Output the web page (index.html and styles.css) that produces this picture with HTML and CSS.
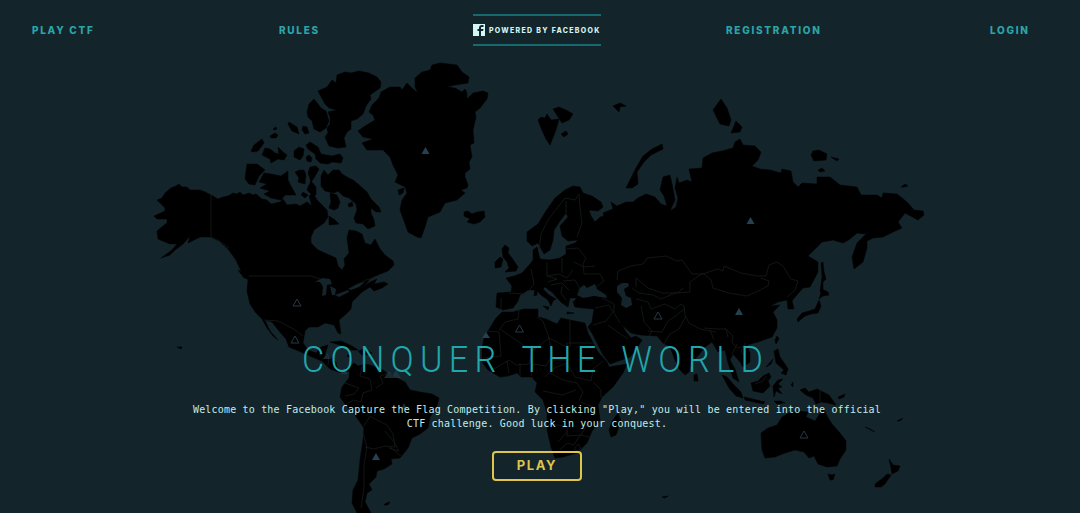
FILE: index.html
```html
<!DOCTYPE html>
<html lang="en">
<head>
<meta charset="utf-8">
<title>Capture the Flag</title>
<link rel="stylesheet" href="styles.css">
</head>
<body>
<div class="page">
<svg class="map" viewBox="0 0 1080 513" aria-hidden="true">
<g class="land">
<!-- North America -->
<path d="M157 200L162 198 165 193 171 188 176 186 179 184 182 187 187 187 190 190 200 190 205 192 213 196 218 199 223 197 228 196 233 193 237 194 240 192 243 195 249 193 253 195 256 194 262 199 267 200 271 204 280 202 283 199 287 205 296 204 300 206 307 202 312 206 309 196 313 193 317 200 322 205 327 210 328 217 324 223 314 230 311 237 311 243 318 250 327 254 336 258 338 266 342 270 345 265 344 259 349 253 348 245 347 238 349 230 356 231 362 234 365 243 371 245 375 239 380 249 385 255 393 261 394 265 388 271 380 274 371 278 364 286 370 282 377 279 374 284 384 282 388 284 382 288 374 291 370 287 362 292 357 297 352 302 351 309 345 315 339 320 340 327 341 334 338 333 334 325 325 323 318 327 309 327 305 331 303 343 308 350 316 353 321 347 328 345 325 354 331 358 336 362 337 368 342 371 350 366 350 371 341 373 330 369 322 361 312 357 301 352 289 347 286 339 279 331 272 322 265 320 270 331 278 340 273 336 267 328 262 319 256 313 250 304 247 291 248 280 241 271 236 260 228 249 219 241 210 237 200 237 194 240 188 243 190 236 183 244 175 250 170 255 161 258 172 250 177 244 170 244 158 239 157 231 163 226 167 223 167 219 157 219 154 216 165 211 165 208z"/>
<path d="M245 179L247 164 257 164 265 170 259 176 255 185 249 184zM251 151L254 145 262 139 264 143 258 151 253 152zM262 155L265 148 270 149 275 153 279 154 278 147 283 152 287 155 284 160 278 159 271 163 270 159zM259 182L264 173 271 174 281 176 288 171 288 180 292 188 296 195 285 195 281 200 271 198 264 194 270 191 260 188 267 184zM294 157L294 151 299 147 304 149 303 156 300 160zM302 130L303 126 307 127 309 133 305 134zM288 124L289 122 297 127 299 134 292 131zM270 136L275 133 278 135 276 138 271 138zM273 129L276 127 277 129 274 130zM306 157L309 155 312 158 311 162 307 161zM306 145L310 142 318 147 321 154 332 156 340 154 343 158 341 163 332 162 328 164 320 163 316 159 315 154 308 149zM308 173L310 167 316 166 319 169 314 178 311 182zM308 187L311 181 316 187 316 195 312 195 307 190zM295 172L300 170 304 170 306 175 305 184 298 182 299 178zM301 195L303 192 308 195 305 198z"/>
<path d="M321 176L324 170 328 175 333 170 339 170 342 174 347 177 353 180 358 184 367 192 371 199 379 207 381 212 376 212 371 208 371 213 374 220 375 226 368 229 363 224 356 223 354 218 357 210 356 204 349 198 343 196 338 191 334 193 325 191 321 186zM330 193L337 195 340 202 338 208 334 210 329 208 331 202zM329 216L335 220 339 224 329 225zM348 204L352 202 353 206 349 207z"/>
<path d="M318 91L327 87 332 80 336 83 337 75 345 72 351 73 359 71 369 73 377 77 381 82 380 88 370 95 371 99 366 106 363 114 357 119 351 121 351 129 347 132 344 138 346 147 338 148 329 146 325 137 328 133 327 128 330 124 330 117 328 112 337 110 329 108 325 104z"/>
<path d="M307 112L309 104 314 99 318 104 321 108 326 111 329 121 326 128 320 132 314 129 312 121 308 117z"/>
<!-- Greenland -->
<path d="M358 131L365 126 375 120 373 115 369 112 372 105 379 98 381 92 390 87 400 87 402 90 407 83 413 89 418 93 415 87 415 78 422 72 430 70 432 65 440 63 457 65 462 72 469 77 468 83 455 85 447 87 455 88 462 92 465 89 467 93 467 99 473 93 483 91 488 93 487 99 480 108 475 112 476 117 473 130 474 143 470 145 472 157 469 162 470 169 465 173 465 177 468 185 467 188 461 190 465 193 457 200 445 203 440 212 428 217 425 227 421 238 417 237 408 232 403 218 400 210 402 200 407 193 405 187 395 182 398 175 393 165 390 157 383 150 367 150 362 143 373 139 363 137z"/>
<path d="M398 190L404 188 403 193 399 195zM464 212L468 211 472 214 477 212 484 211 485 217 480 222 474 224 467 222 470 219 464 216zM330 342L341 341 352 346 358 350 350 350 343 346zM358 351L364 349 372 353 363 356zM347 355h4l1 2h-4zM386 503L390 502 388 505 384 505zM238 270L244 273 250 279 244 278z"/>
<!-- South America -->
<path d="M350 366L354 363 358 366 366 364 373 366 380 368 387 373 395 377 405 382 410 390 420 392 432 394 439 398 437 406 430 417 428 428 420 434 412 438 408 448 400 458 391 459 392 464 384 469 377 471 376 477 369 484 372 490 367 493 365 502 371 513 357 513 352 503 353 490 358 480 360 460 363 440 364 428 355 415 348 408 340 397 342 387 349 378z"/>
<!-- Europe and Asia -->
<path d="M527 241L527 232 538 224 546 211 555 198 565 190 573 186 580 187 583 193 592 196 601 202 603 207 598 211 589 210 591 216 595 222 600 217 604 216 603 213 613 209 611 202 617 206 626 202 633 202 638 198 646 194 655 197 661 204 667 206 664 196 660 190 663 177 670 175 672 184 675 200 670 211 676 207 678 198 675 188 677 177 679 183 687 180 692 182 689 169 702 168 703 158 712 153 722 151 733 148 735 142 740 139 743 145 755 146 761 152 758 160 752 166 760 169 770 170 781 173 782 169 791 171 793 182 798 187 802 183 817 184 817 177 830 177 840 185 857 187 861 195 877 195 882 198 883 193 897 194 907 202 914 210 923 211 924 215 918 220 905 213 898 222 902 228 893 232 883 237 873 238 867 241 867 248 863 262 854 269 852 257 857 243 870 230 865 234 857 233 850 239 843 243 833 240 822 242 815 249 808 256 818 262 818 272 810 287 803 288 795 297 792 301 794 309 788 309 787 300 778 302 770 306 780 305 773 312 777 320 777 328 772 337 758 342 747 345 750 353 750 362 743 367 740 362 733 354 730 360 735 369 739 382 733 378 728 363 725 350 718 352 712 342 705 347 697 357 691 362 689 372 685 375 680 370 675 360 670 347 663 343 657 336 640 335 631 333 622 325 626 332 631 338 636 336 642 340 637 348 630 357 610 364 603 355 593 335 588 327 592 322 594 309 583 308 575 307 573 302 577 298 570 298 568 307 562 303 557 298 553 293 545 287 543 289 549 295 556 299 553 301 551 306 548 300 541 295 536 290 528 290 520 295 518 301 513 308 503 310 496 307 497 293 511 292 512 286 506 278 514 276 522 273 530 264 533 260 533 250 537 247 540 259 550 260 560 258 566 254 566 246 575 243 578 240 568 241 562 236 560 226 568 217 566 213 560 221 554 230 553 240 550 250 544 254 538 243 532 246z"/>
<path class="sea" d="M577 295L580 288 584 285 587 288 595 284 597 289 606 295 607 298 594 296 583 298zM617 292L617 286 622 283 628 283 629 286 624 289 626 296 631 298 632 305 626 308 621 305 622 298z"/>
<path d="M502 249L505 245 509 248 508 253 512 258 518 267 516 271 505 272 509 268 507 262 503 257zM495 262L500 257 503 259 501 267 495 268zM538 120L541 117 545 118 547 114 551 120 559 119 556 130 550 145 546 139 541 128zM553 109L559 107 566 110 573 114 569 120 562 123zM561 134L566 131 568 134 564 137zM626 188L630 180 636 168 643 156 652 149 662 144 663 149 651 155 644 162 637 172 638 184 632 188zM713 110L721 99 727 108 731 120 729 126 720 124 715 114zM731 133L736 121 742 127 740 132zM613 106L620 103 626 106 620 107 619 112zM811 155L813 151 819 150 827 154 826 160 814 161zM831 157L839 159 837 161zM818 170L822 168 825 171 820 172zM901 187L905 184 908 186 904 187zM821 263L823 262 824 272 826 279 823 282 823 291 820 292 822 277zM820 296L822 289 828 292 829 295 823 296 819 299zM797 319L802 313 809 311 815 309 819 300 821 306 818 313 811 314 805 316 798 322z"/>
<path d="M777 336L779 339 776 344 775 340zM774 351L778 349 780 357 785 364 788 369 786 375 781 373 784 370 776 363zM766 367L773 359 771 364zM722 375L727 377 734 385 741 392 743 398 736 396 729 388zM744 397L757 400 765 402 763 404 745 400zM751 383L758 381 763 376 769 373 771 377 768 381 770 386 763 393 753 391zM773 386L778 380 783 379 778 384 782 387 778 388 782 394 776 391 774 397zM800 390L805 388 809 392 817 389 829 395 836 405 828 403 821 402 816 404 813 398 806 395zM694 375L697 374 698 381 694 381zM774 401h7l4 2-8 1zM791 385l2-3 0 5zM838 397L845 394 844 397 839 399z"/>
<!-- Africa -->
<path d="M482 350L484 338 491 326 496 318 502 312 513 312 524 309 538 309 538 317 546 319 557 324 561 318 570 320 585 323 588 333 598 352 607 362 609 367 627 364 623 373 613 387 602 397 598 405 600 420 592 431 587 443 577 453 563 457 555 458 551 447 547 430 547 413 543 400 535 392 537 383 532 377 521 377 517 373 508 376 500 377 488 370 482 362zM618 413L621 421 616 435 611 437 609 430 612 421z"/>
<path d="M535 288L537 288 537 295 534 296zM543 306L549 307 548 310zM567 312L574 313 567 314z"/>
<!-- Oceania -->
<path d="M761 433L768 428 777 425 782 417 789 413 797 411 808 412 806 417 815 421 819 415 823 407 827 416 832 424 840 433 846 441 846 450 840 459 837 466 827 467 818 464 814 456 809 458 804 452 795 450 785 453 775 457 765 458 762 450zM828 474L832 475 835 474 833 480 830 480zM889 459L893 465 900 466 898 471 892 474 891 468zM887 474L891 475 885 484 881 487 875 487 875 484 883 478zM865 427l5 2 5 3-2-1zM897 421l6-3-3 3zM662 497l6-1-3 2zM177 347l5 0-1 2z"/>
</g>
<g class="water">
<path d="M315 282l7-4 8 1 2 5-5 1-1 10-4 1 1-9-3-5zM330 286l6 3-1 6-3 0zM335 295l13-5 1 2-10 5zM348 289l9-5 8-2-6 5-8 3z"/>
</g>
<g class="borders">
<path d="M211 194v43l10 5 8 6M249 276h62l9 3M358 284l8-4 9-2M264 320l14 1 8 4 9 5 8 6M320 348v8M329 355l-1 10M362 366l-2 10 10 3 2 11-9 3-2 9-8-2-7 5M345 383l14 5-5 6-9 2M388 373l-8 3 3 7-7 5M364 426l6-10 5 3 12 6 6 9 2 13-10-1-11 3-9-2M363 433l4 14-3 18 0 22-3 21M385 431l9 11 5 9-10-3M390 447l11 9"/>
<path d="M539 249l2-15 7-14 10-13 7-9 10 2 4-6 1 14 2 15-5 14M566 201l0 12M567 249l11-1 8 10-3 6 1 10 16 0 4 7-8 6M547 262l0 14 10 3-9 3M531 269l3 15-6 8M547 276l12-2 8 4 6-8M563 281l12-1 4 7 0 8M551 285l11-2 7 7M526 294l-17-1M501 298v12M562 286l-1 7 5 7M574 262l10 5 11-1M562 258v15"/>
<path d="M499 330l6-8 13-3 1-9M486 331l13 1 2 24-18 2M500 329l32 22 17-13-6-17-6-4M549 338l18 9 0-4h27M570 320v27M532 351l-3 13-13 1-7-5-15 9M549 338l3 18-6 10-14-2M567 347l0 16-13 5-9 9M567 363l8 14 16 4 2-12 10-8M507 361l2 12M520 363v14M533 364l-2 12M550 373l13 7 14 3 6 9-4 9M543 391l19 4 14-5M593 382l8 8v8M581 402l12 5M548 424l19 2 0 10 14-1 6-10M558 442l10-11M560 450l7-7 7 2 6-10 10 2M574 449l4-5 3 4-4 3z"/>
<path d="M617 280l1-9 13-5 12-2 4-6 19-2 11 5 5-1 10 14 11 0 14-5 6 2 1-5 17 7 16 3 9 0 3-11 8-3 6 4 8 13 7 2-3 9-8 7M703 273l8 7 2 8 16 5 18 3 11-5 10-5 1-5-8-3M632 288l7 5 14 2 8 4 14-6 15-1 0-10 13-9M636 287v-9l12 10 14 5 16 0 5-5M636 299l12 3 3 7 14-5 10 5 6-5 3 2 1 9 4 8 11 6 16 3M641 306l3 16 8 9-3 5M648 331l14 1 6-11 9-6 8-7M664 344l6-10 9-5 7-13M704 328l13 1 9 0 2 8M710 330l4 10M725 328l8 8-1 7 6 5 8-3M737 344l-5 10M745 343l-4 9 4 4M595 308l14-3 4 7-7 9-13 4M602 298l12 6 0 9 6 10M608 325l8 6 12 8M820 391v11M755 384l8-3 3-5"/>
</g>
<g class="pins">
<path class="solid" d="M425.500 147l4 7h-8zM750.500 217l4 7h-8zM739 308l4 7h-8zM376 453l4 7h-8zM486 332l4 6h-8z"/>
<path class="solid faint" d="M327 353l4 6h-8zM344 368l4 6h-8zM389 371l5 7h-10zM396 370l5 8h-10zM404 403l3 6h-6z"/>
<path class="hollow" d="M297 299l4 7h-8zM295 336l4 7h-8zM519.500 325l4 7h-8zM658 312l4 7h-8zM804 431l4 7h-8z"/>
</g>
</svg>
<nav class="nav">
<a>Play CTF</a><a>Rules</a>
<div class="brand"><svg class="logo" viewBox="0 0 12 12"><path class="logo-bg" d="M0 0h12v12H0z"/><path class="logo-f" d="M6 12V7H4.500V5H6V4c0-2 1-3 3-3h1.500v2H9c-.8 0-1 .3-1 1v1h2.500L10 7H8v5z"/></svg><span>Powered by Facebook</span></div>
<a>Registration</a><a>Login</a>
</nav>
<main class="hero">
<h1><span class="w1">Conquer</span><span class="w2">the</span><span class="w3">World</span></h1>
<p>Welcome to the Facebook Capture the Flag Competition. By clicking "Play," you will be entered into the official<br>CTF challenge. Good luck in your conquest.</p>
<a class="play">Play</a>
</main>
</div>
</body>
</html>
```
FILE: styles.css
```css
* { box-sizing: border-box; }
body { margin: 0; background: #14242b; }
.page { position: relative; height: 513px; overflow: hidden; }
.map { position: absolute; inset: 0; width: 1080px; height: 513px; }
.land { fill: #000; stroke: #000; stroke-width: .5; stroke-linejoin: round; }
.sea, .water { fill: #14242b; stroke: none; }
.borders { fill: none; stroke: #171b1b; stroke-width: .8; }
.solid { fill: #25414f; }
.faint { opacity: .65; }
.hollow { fill: none; stroke: #263842; stroke-width: 1; }
.nav {
  position: relative;
  display: grid;
  grid-template-columns: 247px 194px 253px 264px 1fr;
  align-items: center;
  height: 60px;
  padding-left: 32px;
  font: 800 10px/12px Inter, sans-serif;
  letter-spacing: 1.72px;
  text-transform: uppercase;
  color: #2ba5a8;
}
.brand {
  display: flex;
  align-items: center;
  gap: 4px;
  width: 128px;
  height: 32px;
  border-top: 2px solid #176b70;
  border-bottom: 2px solid #176b70;
  color: #d2f4f4;
  font-size: 7px;
  font-weight: 800;
  letter-spacing: 1.3px;
  white-space: nowrap;
}
.brand span { padding-top: 1px; }
.logo { width: 12px; height: 12px; flex: none; }
.logo-bg { fill: #d2f8f7; }
.logo-f { fill: #14242b; }
.hero {
  position: relative;
  display: flex;
  flex-direction: column;
  align-items: center;
  padding-top: 279px;
}
/* Slightly condensed thin capitals, squeezed from the left edge */
h1 {
  display: flex;
  align-self: stretch;
  margin: 0 0 0 302px;
  font: 300 36px/42px Roboto, sans-serif;
  text-transform: uppercase;
  color: #20a6ac;
  transform: scaleX(.95);
  transform-origin: 0 50%;
}
h1 span { flex: none; white-space: nowrap; }
.w1 { width: 231px; letter-spacing: 6.6px; }
.w2 { width: 105px; letter-spacing: 5.6px; }
.w3 { letter-spacing: 6.8px; }
p {
  margin: 22px 0 0;
  padding-right: 6px;
  text-align: center;
  white-space: nowrap;
  font: 10px/14px "DejaVu Sans Mono", monospace;
  letter-spacing: .178px;
  color: #c1ecea;
}
.play {
  display: flex;
  align-items: center;
  justify-content: center;
  width: 90px;
  height: 30px;
  margin: 20px 6px 0 0;
  padding: 0 0 2px 0;
  border: 2px solid #dec54c;
  border-radius: 4px;
  font: 700 13px/16px Inter, sans-serif;
  letter-spacing: 1.6px;
  text-transform: uppercase;
  color: #dec54c;
}
```
